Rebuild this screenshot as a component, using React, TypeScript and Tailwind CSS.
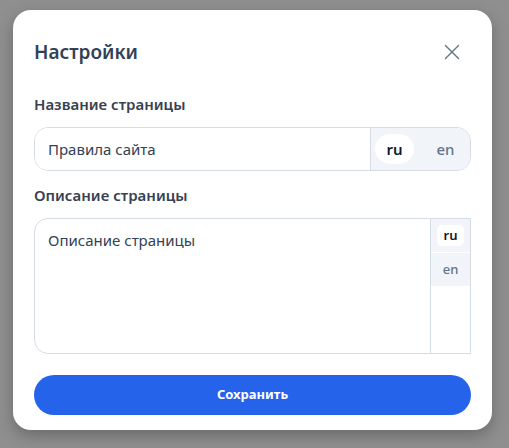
import { X } from 'lucide-react';

const font = { fontFamily: '"Noto Sans", "Open Sans", sans-serif' };

export default function App() {
  return (
    <div className="w-[509px] h-[448px] bg-[#8f8f8f] pt-[10px] pl-[13px] overflow-hidden" style={font}>
      <div className="w-[479px] h-[420px] bg-white rounded-[18px] shadow-[0_6px_16px_rgba(0,0,0,0.25)] px-[21px] pt-[28px]">
        <div className="flex items-center justify-between h-[28px]">
          <h2 className="text-[19px] leading-[28px] font-semibold text-[#334155]">Настройки</h2>
          <button className="w-[28px] h-[28px] flex items-center justify-center text-[#64748b] mr-[5px]">
            <X className="w-[26px] h-[26px]" strokeWidth={1.3} />
          </button>
        </div>

        <div className="mt-[27px] text-[15px] leading-[22px] font-semibold text-[#374151]">Название страницы</div>
        <div className="mt-[12px] h-[44px] flex border border-[#d5dce6] rounded-[14px] overflow-hidden">
          <input
            className="flex-1 min-w-0 px-[13px] text-[15px] text-[#334155] outline-none bg-white"
            defaultValue="Правила сайта"
          />
          <div className="w-[100px] flex items-center gap-[12px] bg-[#f1f5f9] border-l border-[#d5dce6] px-[4px]">
            <span className="w-[39px] h-[30px] rounded-full bg-white flex items-center justify-center text-[15px] font-semibold text-[#0f172a]">ru</span>
            <span className="w-[39px] h-[30px] rounded-full flex items-center justify-center text-[15px] font-medium text-[#64748b]">en</span>
          </div>
        </div>

        <div className="mt-[13px] text-[15px] leading-[22px] font-semibold text-[#374151]">Описание страницы</div>
        <div className="mt-[12px] h-[136px] flex border border-[#d5dce6] rounded-l-[14px] overflow-hidden">
          <textarea
            className="flex-1 min-w-0 px-[13px] py-[10px] text-[15px] leading-[22px] text-[#334155] outline-none resize-none"
            defaultValue="Описание страницы"
          />
          <div className="w-[40px] flex flex-col gap-px border-l border-[#d5dce6] bg-white">
            <div className="h-[33px] bg-[#f1f5f9] flex items-center justify-center">
              <span className="w-[27px] h-[21px] rounded-[5px] bg-white flex items-center justify-center text-[13px] font-semibold text-[#0f172a]">ru</span>
            </div>
            <div className="h-[33px] bg-[#f1f5f9] flex items-center justify-center text-[13px] font-medium text-[#64748b]">en</div>
          </div>
        </div>

        <button className="mt-[21px] w-full h-[40px] rounded-full bg-[#2563eb] text-white text-[13px] font-bold">
          Сохранить
        </button>
      </div>
    </div>
  );
}
